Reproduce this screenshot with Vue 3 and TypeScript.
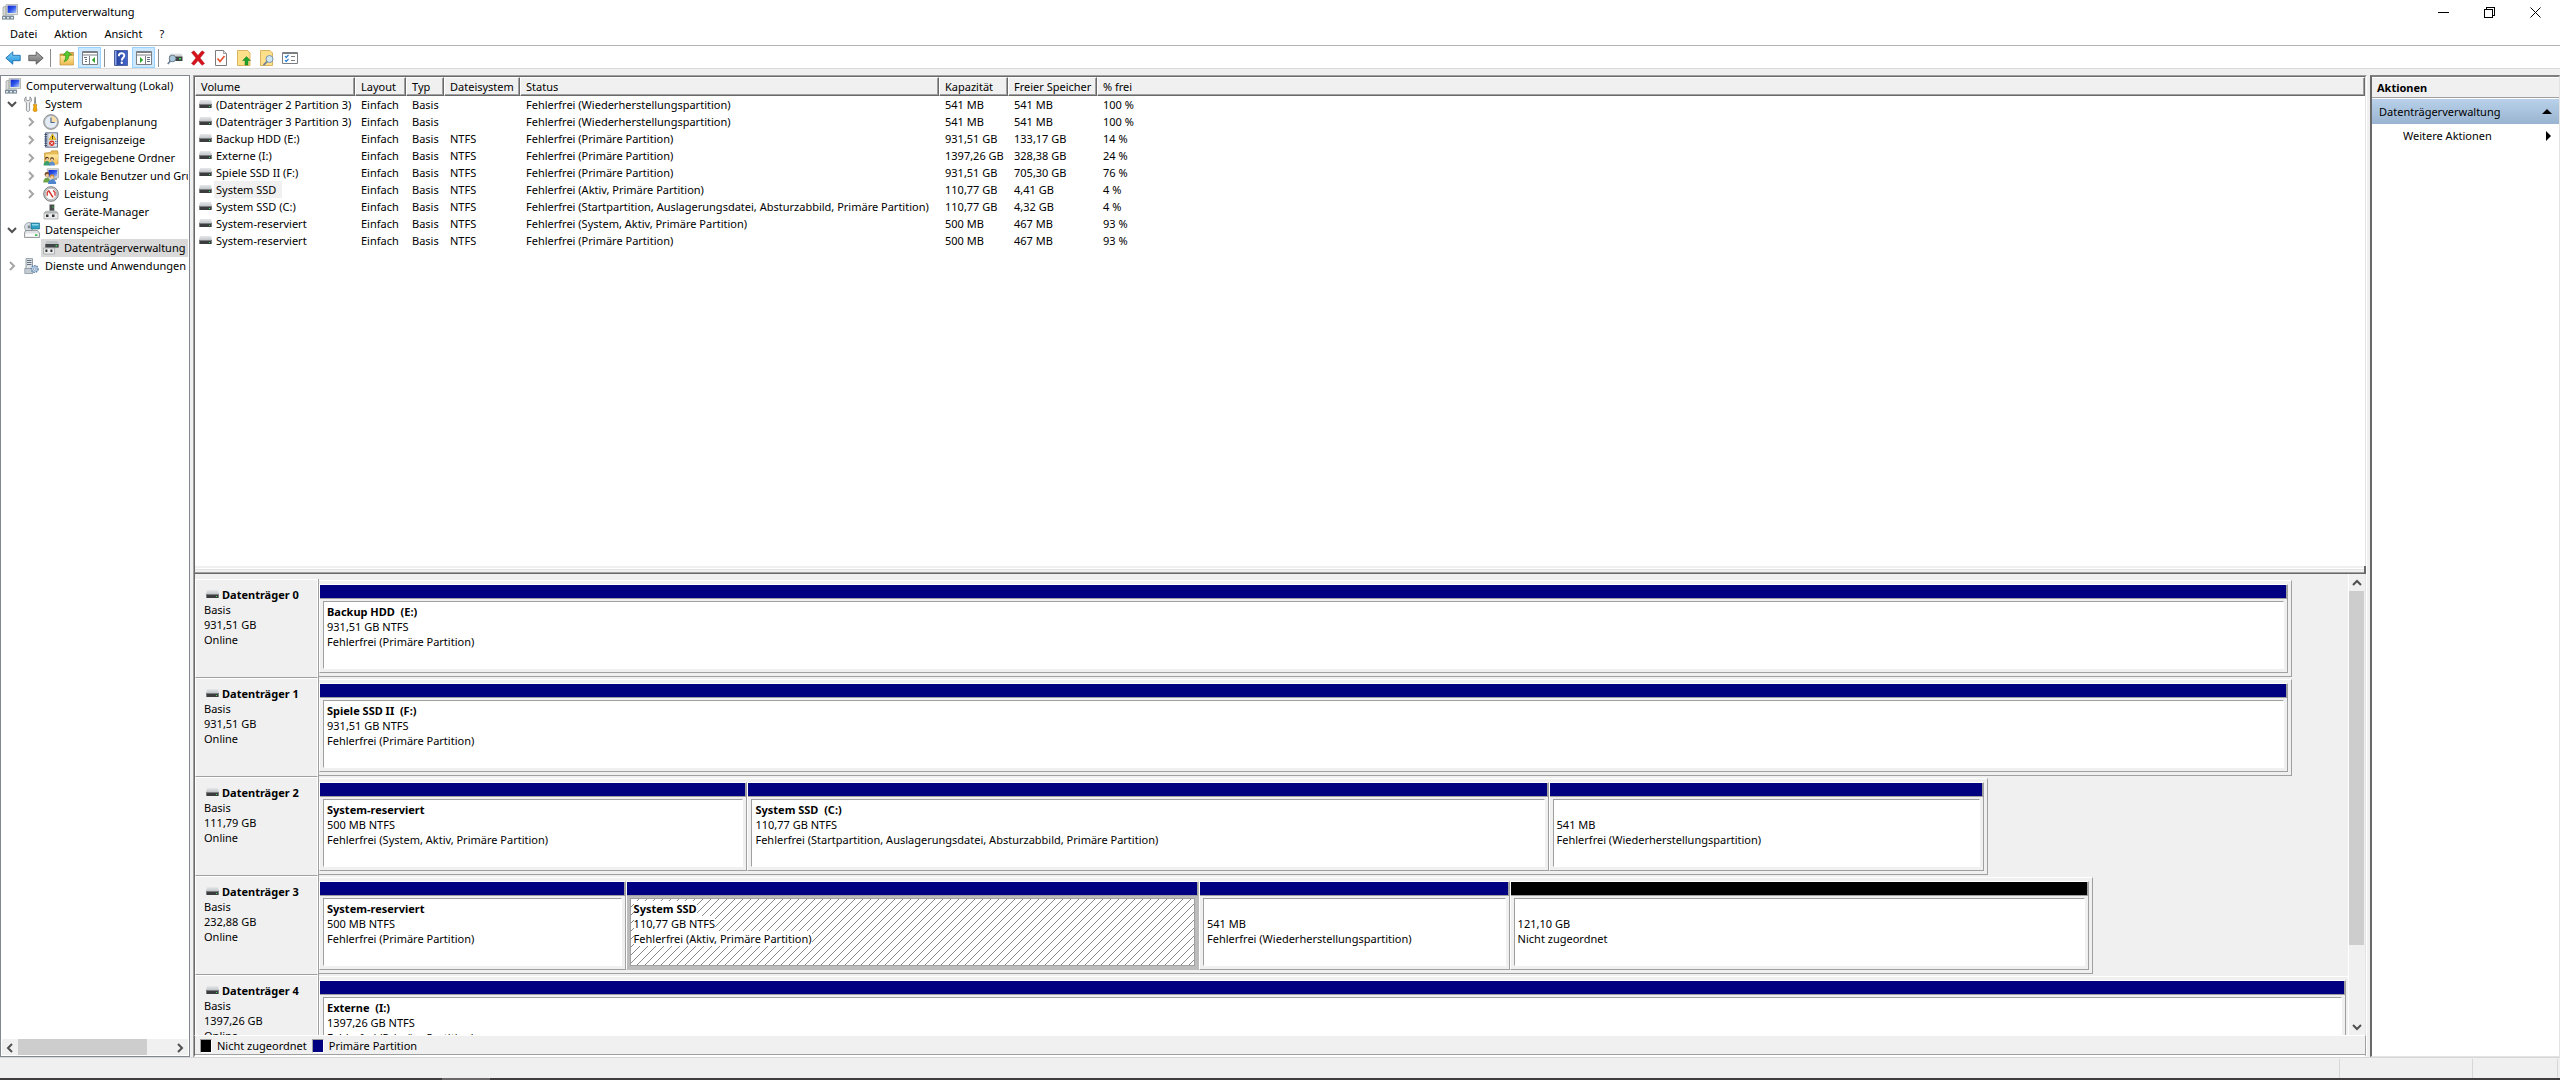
<script setup lang="ts">
interface TreeItem {
  label: string
  icon: string
  level: number
  state: 'open' | 'closed' | 'leaf'
  selected?: boolean
}

interface Volume {
  name: string
  fs: string
  status: string
  capacity: string
  free: string
  percent: string
  highlighted?: boolean
}

interface Partition {
  title: string
  size: string
  status: string
  weight: number
  unallocated?: boolean
  selected?: boolean
}

interface Disk {
  name: string
  size: string
  span: number
  partitions: Partition[]
}

interface Tool {
  icon: string
  label: string
  active?: boolean
  separator?: boolean
}

const menus: string[] = ['Datei', 'Aktion', 'Ansicht', '?']

const tools: Tool[] = [
  { icon: 'back', label: 'Zurück' },
  { icon: 'forward', label: 'Vorwärts', separator: true },
  { icon: 'folder-up', label: 'Übergeordnete Ebene' },
  { icon: 'tree-pane', label: 'Konsolenstruktur', active: true, separator: true },
  { icon: 'help', label: 'Hilfe' },
  { icon: 'action-pane', label: 'Aktionsbereich', active: true, separator: true },
  { icon: 'rescan', label: 'Datenträger neu einlesen' },
  { icon: 'delete', label: 'Löschen' },
  { icon: 'check-page', label: 'Eigenschaften' },
  { icon: 'page-up', label: 'Öffnen' },
  { icon: 'page-find', label: 'Durchsuchen' },
  { icon: 'options', label: 'Einstellungen' },
]

const tree: TreeItem[] = [
  { label: 'Computerverwaltung (Lokal)', icon: 'computer', level: 0, state: 'leaf' },
  { label: 'System', icon: 'system', level: 1, state: 'open' },
  { label: 'Aufgabenplanung', icon: 'clock', level: 2, state: 'closed' },
  { label: 'Ereignisanzeige', icon: 'events', level: 2, state: 'closed' },
  { label: 'Freigegebene Ordner', icon: 'shared', level: 2, state: 'closed' },
  { label: 'Lokale Benutzer und Gruppen', icon: 'users', level: 2, state: 'closed' },
  { label: 'Leistung', icon: 'gauge', level: 2, state: 'closed' },
  { label: 'Geräte-Manager', icon: 'devices', level: 2, state: 'leaf' },
  { label: 'Datenspeicher', icon: 'storage', level: 1, state: 'open' },
  { label: 'Datenträgerverwaltung', icon: 'diskmgmt', level: 2, state: 'leaf', selected: true },
  { label: 'Dienste und Anwendungen', icon: 'services', level: 1, state: 'closed' },
]

const columns: { label: string; cls: string }[] = [
  { label: 'Volume', cls: 'c-volume' },
  { label: 'Layout', cls: 'c-layout' },
  { label: 'Typ', cls: 'c-type' },
  { label: 'Dateisystem', cls: 'c-fs' },
  { label: 'Status', cls: 'c-status' },
  { label: 'Kapazität', cls: 'c-capacity' },
  { label: 'Freier Speicher', cls: 'c-free' },
  { label: '% frei', cls: 'c-percent' },
]

const recovery = 'Fehlerfrei (Wiederherstellungspartition)'
const primary = 'Fehlerfrei (Primäre Partition)'
const startup = 'Fehlerfrei (Startpartition, Auslagerungsdatei, Absturzabbild, Primäre Partition)'

const volumes: Volume[] = [
  { name: '(Datenträger 2 Partition 3)', fs: '', status: recovery, capacity: '541 MB', free: '541 MB', percent: '100 %' },
  { name: '(Datenträger 3 Partition 3)', fs: '', status: recovery, capacity: '541 MB', free: '541 MB', percent: '100 %' },
  { name: 'Backup HDD (E:)', fs: 'NTFS', status: primary, capacity: '931,51 GB', free: '133,17 GB', percent: '14 %' },
  { name: 'Externe (I:)', fs: 'NTFS', status: primary, capacity: '1397,26 GB', free: '328,38 GB', percent: '24 %' },
  { name: 'Spiele SSD II (F:)', fs: 'NTFS', status: primary, capacity: '931,51 GB', free: '705,30 GB', percent: '76 %' },
  { name: 'System SSD', fs: 'NTFS', status: 'Fehlerfrei (Aktiv, Primäre Partition)', capacity: '110,77 GB', free: '4,41 GB', percent: '4 %', highlighted: true },
  { name: 'System SSD (C:)', fs: 'NTFS', status: startup, capacity: '110,77 GB', free: '4,32 GB', percent: '4 %' },
  { name: 'System-reserviert', fs: 'NTFS', status: 'Fehlerfrei (System, Aktiv, Primäre Partition)', capacity: '500 MB', free: '467 MB', percent: '93 %' },
  { name: 'System-reserviert', fs: 'NTFS', status: primary, capacity: '500 MB', free: '467 MB', percent: '93 %' },
]

/* Disk spans are relative to the full width of the graph area. */
const fullSpan = 2029

const disks: Disk[] = [
  {
    name: 'Datenträger 0', size: '931,51 GB', span: 1973,
    partitions: [{ title: 'Backup HDD  (E:)', size: '931,51 GB NTFS', status: primary, weight: 1 }],
  },
  {
    name: 'Datenträger 1', size: '931,51 GB', span: 1973,
    partitions: [{ title: 'Spiele SSD II  (F:)', size: '931,51 GB NTFS', status: primary, weight: 1 }],
  },
  {
    name: 'Datenträger 2', size: '111,79 GB', span: 1669,
    partitions: [
      { title: 'System-reserviert', size: '500 MB NTFS', status: 'Fehlerfrei (System, Aktiv, Primäre Partition)', weight: 428 },
      { title: 'System SSD  (C:)', size: '110,77 GB NTFS', status: startup, weight: 802 },
      { title: '', size: '541 MB', status: recovery, weight: 435 },
    ],
  },
  {
    name: 'Datenträger 3', size: '232,88 GB', span: 1774,
    partitions: [
      { title: 'System-reserviert', size: '500 MB NTFS', status: primary, weight: 306 },
      { title: 'System SSD', size: '110,77 GB NTFS', status: 'Fehlerfrei (Aktiv, Primäre Partition)', weight: 574, selected: true },
      { title: '', size: '541 MB', status: recovery, weight: 310 },
      { title: '', size: '121,10 GB', status: 'Nicht zugeordnet', weight: 580, unallocated: true },
    ],
  },
  {
    name: 'Datenträger 4', size: '1397,26 GB', span: 2031,
    partitions: [{ title: 'Externe  (I:)', size: '1397,26 GB NTFS', status: primary, weight: 1 }],
  },
]

const diskWidth = (disk: Disk) => ({ width: `${(disk.span / fullSpan) * 100}%` })
</script>

<template>
  <svg class="sprite" aria-hidden="true">
    <defs>
      <linearGradient id="gScreen" x1="0" y1="0" x2="1" y2="1">
        <stop offset="0" stop-color="#1020c8" /><stop offset="0.5" stop-color="#2f57ea" /><stop offset="1" stop-color="#b9cdf8" />
      </linearGradient>
      <linearGradient id="gBlue" x1="0" y1="0" x2="0" y2="1">
        <stop offset="0" stop-color="#7fd0f7" /><stop offset="1" stop-color="#1f8fd8" />
      </linearGradient>
      <linearGradient id="gGray" x1="0" y1="0" x2="0" y2="1">
        <stop offset="0" stop-color="#b5b5b5" /><stop offset="1" stop-color="#6c6c6c" />
      </linearGradient>
      <linearGradient id="gFolder" x1="0" y1="0" x2="0" y2="1">
        <stop offset="0" stop-color="#ffe9a3" /><stop offset="1" stop-color="#eebb50" />
      </linearGradient>
      <linearGradient id="gHelp" x1="0" y1="0" x2="1" y2="0">
        <stop offset="0" stop-color="#1f3c96" /><stop offset="1" stop-color="#4668cf" />
      </linearGradient>
      <linearGradient id="gDrive" x1="0" y1="0" x2="0" y2="1">
        <stop offset="0" stop-color="#e6e8ea" /><stop offset="1" stop-color="#c3c7ca" />
      </linearGradient>
      <pattern id="hatch" width="8" height="8" patternUnits="userSpaceOnUse">
        <path
          fill="#8a8a8a" shape-rendering="crispEdges"
          d="M0 7h1v1H0zM1 6h1v1H1zM2 5h1v1H2zM3 4h1v1H3zM4 3h1v1H4zM5 2h1v1H5zM6 1h1v1H6zM7 0h1v1H7z"
        />
      </pattern>
    </defs>

    <symbol id="i-computer" viewBox="0 0 16 16">
      <path fill="#d8dad6" stroke="#8b9190" stroke-width="0.6" d="M1 3l3-1v9l-3 1z" />
      <path fill="#e4e6e0" stroke="#8f938c" stroke-width="0.6" d="M4.3.4h11.2v10.2H4.3z" />
      <path fill="url(#gScreen)" d="M5.6 1.6h8.8v7.4H5.6z" />
      <path fill="#9fb4c4" d="M3 11.2h8.5l1 2.2H3z" />
      <path fill="#7c8c98" d="M0 12h12v3.6H0z" />
      <path fill="#dfe8ee" d="M1 13h2v1.6H1zM5 13h2v1.6H5zM9 13h2v1.6H9z" />
    </symbol>

    <symbol id="i-system" viewBox="0 0 16 16">
      <path
        fill="#e9ebec" stroke="#7d8284" stroke-width="0.8"
        d="M2 .8L.8 2.4.6 5l1.8 1.8v7c0 2.2 3.2 2.2 3.2 0v-7L7.400 5l-.2-2.600L6 .8v3L4 4.800l-2-1z"
      />
      <path fill="#8b9092" d="M10.400.8h1.400l.4 7h-2.200z" />
      <path fill="#f5a800" stroke="#b87a08" stroke-width="0.6" d="M9.300 8.400h3.600l-.6 2 .8 3.800c0 1.800-4 1.800-4 0l.8-3.800z" />
    </symbol>

    <symbol id="i-clock" viewBox="0 0 16 16">
      <circle cx="8" cy="8" r="7.400" fill="#b4b6b9" stroke="#85888c" stroke-width="0.8" />
      <circle cx="8" cy="8" r="6" fill="#e3ebf5" />
      <path fill="#f7dca4" d="M8 8V2A6 6 0 0 1 14 8z" />
      <path fill="none" stroke="#4a6390" stroke-width="1.100" d="M8 3.400V8.500h3.600" />
    </symbol>

    <symbol id="i-events" viewBox="0 0 16 16">
      <path fill="#aeb7c6" stroke="#4d5c7b" stroke-width="0.8" d="M2.500.8h12v14.400h-12z" />
      <path fill="#e4e8ef" d="M5.500 1.500h8.300v13H5.500z" />
      <path fill="#31446b" d="M1.500 2h2.500v1H1.500zM1.500 4.200h2.500v1H1.500zM1.500 6.400h2.500v1H1.500zM1.500 8.600h2.500v1H1.500zM1.500 10.800h2.500v1H1.500zM1.500 13h2.500v1H1.500z" />
      <path fill="#ffcf26" stroke="#b58a00" stroke-width="0.5" d="M9.500 1.800l3.600 5.800H6z" />
      <path fill="#222" d="M9 3.800h1v2H9zM9 6.300h1v.8H9z" />
      <circle cx="8.800" cy="11.300" r="2.700" fill="#d7352b" />
      <path stroke="#fff" stroke-width="0.9" d="M7.700 10.200l2.200 2.200M9.900 10.200l-2.200 2.200" />
      <path fill="#5c7cb8" d="M12 9h1.500v1H12zM12 11h1.500v1H12z" />
    </symbol>

    <symbol id="i-shared" viewBox="0 0 16 16">
      <path fill="#e9bd57" stroke="#b98c2c" stroke-width="0.6" d="M1.500 3l6-.5 1-1.700h6l.5 1.700v11.500H1.500z" />
      <path fill="url(#gFolder)" d="M3 4.500h12.300l-1 10H2z" />
      <circle cx="4" cy="8.500" r="1.800" fill="#5a3b22" />
      <circle cx="4.300" cy="9.200" r="1.200" fill="#f0c9a0" />
      <path fill="#3a9d6c" d="M.5 15.500c0-6 7-6 7 0z" />
      <circle cx="9" cy="9" r="1.800" fill="#46301e" />
      <circle cx="9" cy="9.700" r="1.200" fill="#f0c9a0" />
      <path fill="#5b8fd0" d="M6 15.500c0-5.500 6-5.500 6 0z" />
    </symbol>

    <symbol id="i-users" viewBox="0 0 16 16">
      <path fill="#dfe1dc" stroke="#8f938c" stroke-width="0.6" d="M4.300.8h11.200v9H4.300z" />
      <path fill="url(#gScreen)" d="M5.500 2h8.800v6.700H5.500z" />
      <path fill="#9aa6ae" d="M9 10h5v2H9z" />
      <circle cx="4" cy="6.500" r="2.400" fill="#6e4723" />
      <circle cx="4.200" cy="7.500" r="1.700" fill="#eec398" />
      <path fill="#6fa34a" d="M.2 14.500c0-6.500 7.500-6.500 7.500 0z" />
      <circle cx="9" cy="8.500" r="2.300" fill="#c78f3d" />
      <circle cx="9" cy="9.500" r="1.600" fill="#f2cda4" />
      <path fill="#4f86cd" d="M5 16c0-6.500 8.200-6.500 8.200 0z" />
    </symbol>

    <symbol id="i-gauge" viewBox="0 0 16 16">
      <circle cx="8" cy="8" r="7.300" fill="#d4d6d8" stroke="#66696d" stroke-width="0.9" />
      <circle cx="8" cy="8" r="5.700" fill="#fff" stroke="#85898d" stroke-width="0.5" />
      <path fill="none" stroke="#d3322b" stroke-width="1.300" d="M4.200 9.800V6.500l1.300-1.700M10.200 4.500l1.800 2v3.300" />
      <path stroke="#d3322b" stroke-width="1.500" d="M5.500 4.300l4.500 7" />
    </symbol>

    <symbol id="i-devices" viewBox="0 0 16 16">
      <path fill="#4c4c4c" d="M6.500.5h4.800v6.300H6.500z" />
      <path fill="#2dc84a" d="M9.300 2.500h1.200v1.200H9.300z" />
      <path fill="#c9cbcd" stroke="#999c9e" stroke-width="0.5" d="M3 7h10l2 2H1z" />
      <path fill="#e9eaeb" stroke="#8d9092" stroke-width="0.6" d="M1 9h14v6H1z" />
      <path fill="#333" d="M3 10.500h2.500V13H3zM9 10.500h2.500V13H9z" />
    </symbol>

    <symbol id="i-storage" viewBox="0 0 16 16">
      <circle cx="5" cy="5" r="4.500" fill="#d5dbe0" stroke="#8b9399" stroke-width="0.7" />
      <circle cx="5" cy="5" r="1.400" fill="#7d878e" />
      <path fill="#2d9fc0" stroke="#17677f" stroke-width="0.6" d="M7 1h8.500v6H7z" />
      <path fill="#8ed8ec" d="M8 2h6.500v1.500H8z" />
      <path fill="#dfe2e4" stroke="#74797d" stroke-width="0.7" d="M1.500 8.500h12l2 2.500v4.500H.5V11z" />
      <path fill="#fafafa" d="M1.500 11.500h13v3h-13z" />
      <path fill="#37b24a" d="M11 12.300h2.500v1.600H11z" />
    </symbol>

    <symbol id="i-diskmgmt" viewBox="0 0 16 16">
      <path fill="#bfc3c6" d="M3.500 1h11l1.200 3H2.300z" />
      <path fill="#424548" d="M2.300 4h13.400v3.600H2.300z" />
      <path fill="#3fe05a" d="M12.600 5.100h1.600v1.300h-1.600z" />
      <path fill="#eceded" stroke="#8e9193" stroke-width="0.6" d="M.6 8h11v6H.6z" />
      <path fill="#333" d="M2.400 9.500h2V12h-2zM7.400 9.500h2V12h-2z" />
    </symbol>

    <symbol id="i-services" viewBox="0 0 16 16">
      <path fill="#dde3e8" stroke="#7f8b95" stroke-width="0.8" d="M2 .6h6.500v11H2z" />
      <path fill="#66727d" d="M3 2h4.500v.9H3zM3 4h4.500v.9H3zM3 6h4.500v.9H3z" />
      <path fill="#c5cdd4" stroke="#7f8b95" stroke-width="0.7" d="M.8 10.500h8v5h-8z" />
      <circle cx="10.700" cy="11" r="3.400" fill="#b8cde2" stroke="#5e82a8" stroke-width="1.400" stroke-dasharray="1.500 1" />
      <circle cx="10.700" cy="11" r="1.200" fill="#fff" stroke="#5e82a8" stroke-width="0.6" />
    </symbol>

    <symbol id="i-drive" viewBox="0 0 13 9">
      <path fill="url(#gDrive)" d="M1 0h11l1 4H0z" />
      <path fill="#7b7e80" d="M0 4h13v4H0z" />
      <path fill="#3a3c3e" d="M1 5h11v3H1z" />
      <path fill="#3ee35c" d="M10 6h1v1h-1z" />
    </symbol>

    <symbol id="i-back" viewBox="0 0 16 16">
      <path fill="url(#gBlue)" stroke="#1d71b4" stroke-width="0.9" d="M.8 8l7-6.200v3.500h7.400v5.400H7.800v3.500z" />
    </symbol>
    <symbol id="i-forward" viewBox="0 0 16 16">
      <path fill="url(#gGray)" stroke="#5a5a5a" stroke-width="0.9" d="M15.200 8l-7-6.200v3.500H.8v5.400h7.400v3.500z" />
    </symbol>
    <symbol id="i-folder-up" viewBox="0 0 16 16">
      <path fill="#dca94a" stroke="#a97d2c" stroke-width="0.6" d="M1 4h7l1-1.500h5.500V15H1z" />
      <path fill="url(#gFolder)" d="M1.500 6h13v8.600h-13z" />
      <path fill="#58c832" stroke="#2b8a14" stroke-width="0.6" d="M8 .8l4.500 4-2.400.2c-.2 4-2 6-5.100 6.600 1.500-2 1.700-4 1.500-6.400l-2.300-.2z" />
    </symbol>
    <symbol id="i-tree-pane" viewBox="0 0 16 16">
      <path fill="#fff" stroke="#7b7f84" d="M.5 1.500h15v13H.5z" />
      <path fill="#7b7f84" d="M1 2h14v1H1zM1 4.500h14v1H1zM7 6h1v8H7z" />
      <path fill="#5c6b80" d="M2 7h3v1H2zM3 9h2v1H3zM3 11h2v1H3z" />
      <path fill="#2fa52c" d="M13 7v6L9.800 10z" />
    </symbol>
    <symbol id="i-action-pane" viewBox="0 0 16 16">
      <path fill="#fff" stroke="#7b7f84" d="M.5 1.500h15v13H.5z" />
      <path fill="#7b7f84" d="M1 2h14v1H1zM1 4.500h14v1H1zM9 6h1v8H9z" />
      <path fill="#5c6b80" d="M11 7h3v1h-3zM11 9h3v1h-3zM11 11h3v1h-3z" />
      <path fill="#2fa52c" d="M4 7v6l3.200-3z" />
    </symbol>
    <symbol id="i-help" viewBox="0 0 16 16">
      <path fill="url(#gHelp)" stroke="#1b3279" stroke-width="0.6" d="M1.500.5h13v15h-13z" />
      <path fill="#8fa5ea" d="M2 1h1.500v14H2z" />
      <path fill="none" stroke="#fff" stroke-width="1.900" d="M5.800 6.200c0-3.900 5.500-3.700 5.500-.6 0 2.200-2.500 2.100-2.500 4.800" />
      <circle cx="8.800" cy="12.800" r="1.200" fill="#fff" />
    </symbol>
    <symbol id="i-rescan" viewBox="0 0 16 16">
      <path fill="url(#gDrive)" d="M3 3.500h11.500l1 3H2z" />
      <path fill="#3e4144" d="M2 6.500h13.500V11H2z" />
      <path fill="#35e055" d="M12 8h2v1.600h-2z" />
      <circle cx="5.500" cy="8.500" r="3.300" fill="#a9c6da" stroke="#6f7f8b" />
      <path stroke="#697e98" stroke-width="1.800" d="M3.400 11L.8 14" />
    </symbol>
    <symbol id="i-delete" viewBox="0 0 16 16">
      <path fill="#d8121b" stroke="#a50a10" stroke-width="0.5" d="M1.500 2.500L4 .8l4 4.600 4-4.600 2.500 1.700L10 8l4.500 5.500-2.500 1.700-4-4.600-4 4.600-2.500-1.700L6 8z" />
    </symbol>
    <symbol id="i-check-page" viewBox="0 0 16 16">
      <path fill="#fff" stroke="#7b7b7b" d="M2.500.5h8l3 3v12h-11z" />
      <path fill="#ddd" stroke="#7b7b7b" stroke-width="0.7" d="M10.500.5v3h3" />
      <path fill="none" stroke="#e5532d" stroke-width="1.700" d="M4.500 8.500l2.500 3 4.500-5.500" />
    </symbol>
    <symbol id="i-page-up" viewBox="0 0 16 16">
      <path fill="#ffe08a" stroke="#d0a648" stroke-width="0.8" d="M1.500.5h10l2.500 2.500v12.500H1.500z" />
      <path fill="#1fa32a" stroke="#13791c" stroke-width="0.5" d="M10.500 6.500l3.800 4h-2.300V15H9v-4.500H6.700z" />
    </symbol>
    <symbol id="i-page-find" viewBox="0 0 16 16">
      <path fill="#ffe08a" stroke="#d0a648" stroke-width="0.8" d="M1.500.5h9.500l2.500 2.500v12.500h-12z" />
      <circle cx="10.500" cy="9" r="3.500" fill="#cfe6f4" stroke="#7b93a6" />
      <path stroke="#6c8399" stroke-width="1.700" d="M8 11.700l-3.500 3.500" />
    </symbol>
    <symbol id="i-options" viewBox="0 0 16 16">
      <path fill="#fff" stroke="#7b7f84" d="M.5 2.500h15v11H.5z" />
      <path fill="#7b7f84" d="M1 3h14v1H1zM9 6h4v1H9zM9 10h4v1H9z" />
      <path fill="none" stroke="#2b7fd0" stroke-width="1.200" d="M3 6l1.200 1.500L6.500 5M3 10l1.200 1.500L6.500 9" />
    </symbol>
  </svg>

  <div class="window">
    <header class="titlebar">
      <svg class="icon16"><use href="#i-computer" /></svg>
      <h1>Computerverwaltung</h1>
      <div class="caption-buttons">
        <button type="button" aria-label="Minimieren">
          <svg viewBox="0 0 11 11"><path d="M0 5.500h11" /></svg>
        </button>
        <button type="button" aria-label="Verkleinern">
          <svg viewBox="0 0 11 11"><path d="M.5 2.500h8v8h-8zM2.500 2V.5h8v8H9" /></svg>
        </button>
        <button type="button" aria-label="Schließen">
          <svg class="smooth" viewBox="0 0 11 11"><path d="M.5.5l10 10M10.500.5l-10 10" /></svg>
        </button>
      </div>
    </header>

    <nav class="menubar">
      <button v-for="menu in menus" :key="menu" type="button">{{ menu }}</button>
    </nav>

    <div class="toolbar" role="toolbar">
      <template v-for="tool in tools" :key="tool.icon">
        <button type="button" :class="{ active: tool.active }" :aria-label="tool.label">
          <svg class="icon16"><use :href="`#i-${tool.icon}`" /></svg>
        </button>
        <span v-if="tool.separator" class="separator"></span>
      </template>
    </div>

    <main class="workspace">
      <aside class="tree-pane">
        <ul>
          <li v-for="item in tree" :key="item.label" :class="[`level-${item.level}`, { selected: item.selected }]">
            <button
              v-if="item.state !== 'leaf'" type="button" class="twisty"
              :class="item.state" :aria-label="item.label"
            >
              <svg viewBox="0 0 10 10">
                <path v-if="item.state === 'open'" d="M1 3l4 4 4-4" />
                <path v-else d="M3 1l4 4-4 4" />
              </svg>
            </button>
            <span class="node">
              <svg class="icon16"><use :href="`#i-${item.icon}`" /></svg>
              <span>{{ item.label }}</span>
            </span>
          </li>
        </ul>
        <div class="hscroll">
          <button type="button" aria-label="Nach links"><svg viewBox="0 0 10 10"><path d="M7 1L3 5l4 4" /></svg></button>
          <div class="track"><div class="thumb"></div></div>
          <button type="button" aria-label="Nach rechts"><svg viewBox="0 0 10 10"><path d="M3 1l4 4-4 4" /></svg></button>
        </div>
      </aside>

      <section class="content">
        <div class="volumes">
          <table>
            <colgroup>
              <col v-for="column in columns" :key="column.cls" :class="column.cls" />
            </colgroup>
            <thead>
              <tr>
                <th v-for="column in columns" :key="column.cls" scope="col"><div>{{ column.label }}</div></th>
              </tr>
            </thead>
            <tbody>
              <tr v-for="(volume, index) in volumes" :key="index">
                <td class="name">
                  <div>
                    <svg class="drive"><use href="#i-drive" /></svg>
                    <span :class="{ highlighted: volume.highlighted }">{{ volume.name }}</span>
                  </div>
                </td>
                <td>Einfach</td>
                <td>Basis</td>
                <td>{{ volume.fs }}</td>
                <td>{{ volume.status }}</td>
                <td>{{ volume.capacity }}</td>
                <td>{{ volume.free }}</td>
                <td>{{ volume.percent }}</td>
              </tr>
            </tbody>
          </table>
        </div>
        <div class="splitter"></div>

        <div class="graph">
          <div class="disks">
            <article v-for="disk in disks" :key="disk.name" class="disk">
              <div class="disk-info">
                <h2><svg class="drive"><use href="#i-drive" /></svg>{{ disk.name }}</h2>
                <p>Basis</p>
                <p>{{ disk.size }}</p>
                <p>Online</p>
              </div>
              <div class="disk-area">
                <div class="disk-box" :style="diskWidth(disk)">
                  <div
                    v-for="(part, index) in disk.partitions" :key="index" class="partition"
                    :class="{ unallocated: part.unallocated, selected: part.selected }"
                    :style="{ flexGrow: part.weight }"
                  >
                    <div class="bar"></div>
                    <div class="body">
                      <svg v-if="part.selected" class="hatching"><rect width="100%" height="100%" fill="url(#hatch)" /></svg>
                      <p><strong>{{ part.title }}</strong></p>
                      <p><span>{{ part.size }}</span></p>
                      <p><span>{{ part.status }}</span></p>
                    </div>
                  </div>
                </div>
              </div>
            </article>
          </div>
          <div class="vscroll">
            <button type="button" aria-label="Nach oben"><svg viewBox="0 0 10 10"><path d="M1 7l4-4 4 4" /></svg></button>
            <div class="track"><div class="thumb"></div></div>
            <button type="button" aria-label="Nach unten"><svg viewBox="0 0 10 10"><path d="M1 3l4 4 4-4" /></svg></button>
          </div>
        </div>
        <div class="legend">
          <span><i class="swatch black"></i>Nicht zugeordnet</span>
          <span><i class="swatch navy"></i>Primäre Partition</span>
        </div>
      </section>

      <aside class="actions">
        <h2>Aktionen</h2>
        <button type="button" class="group">
          <span>Datenträgerverwaltung</span>
          <svg class="up" viewBox="0 0 10 5"><path d="M5 0l5 5H0z" /></svg>
        </button>
        <button type="button" class="more">
          <span>Weitere Aktionen</span>
          <svg class="right" viewBox="0 0 5 10"><path d="M0 0l5 5-5 5z" /></svg>
        </button>
      </aside>
    </main>

    <footer class="statusbar"><span></span><span></span><span></span></footer>
    <div class="taskbar"><span></span></div>
  </div>
</template>

<style>
body {
  margin: 0;
  overflow: hidden;
}
</style>

<style scoped>
* {
  box-sizing: border-box;
}

.sprite {
  position: absolute;
  width: 0;
  height: 0;
}

.window {
  display: flex;
  flex-direction: column;
  height: 100vh;
  background: #f0f0f0;
  color: #000;
  font-family: "Noto Sans", "Open Sans", sans-serif;
  font-size: 11px;
  line-height: 18px;
}

h1,
h2,
p,
ul {
  margin: 0;
  padding: 0;
  font-size: inherit;
  font-weight: 400;
  list-style: none;
}

button {
  padding: 0;
  border: 0;
  background: none;
  color: inherit;
  font: inherit;
}

.icon16 {
  flex: none;
  width: 16px;
  height: 16px;
}

.drive {
  flex: none;
  width: 13px;
  height: 9px;
}

/* Title bar, menu and toolbar */
.titlebar {
  display: flex;
  flex: none;
  align-items: center;
  gap: 6px;
  height: 24px;
  padding: 0 2px;
  background: #fff;
}

.titlebar h1 {
  flex: 1;
}

.caption-buttons {
  display: flex;
  height: 20px;
}

.caption-buttons button {
  display: grid;
  place-items: center;
  width: 46px;
}

.caption-buttons svg {
  width: 11px;
  height: 11px;
  fill: none;
  stroke: #000;
  shape-rendering: crispEdges;
}

.caption-buttons .smooth {
  shape-rendering: auto;
}

.menubar {
  display: flex;
  flex: none;
  gap: 17px;
  height: 22px;
  padding: 0 10px 2px;
  border-bottom: 1px solid #b4b4b4;
  background: #fff;
}

.toolbar {
  display: flex;
  flex: none;
  align-items: center;
  height: 23px;
  padding: 1px 0 0 1px;
  border-bottom: 1px solid #dadada;
  background: #fff;
}

.toolbar button {
  display: grid;
  place-items: center;
  width: 23px;
  height: 21px;
}

.toolbar .active {
  border: 1px solid #99d1ff;
  background: #cce8ff;
}

.separator {
  width: 1px;
  height: 18px;
  margin: 0 4px 0 3px;
  background: #8d8d8d;
}

/* Three-pane workspace */
.workspace {
  display: grid;
  flex: 1;
  grid-template-columns: 190px minmax(0, 1fr) 190px;
  gap: 3px;
  min-height: 0;
  padding-top: 6px;
}

.tree-pane {
  display: flex;
  flex-direction: column;
  min-height: 0;
  padding: 1px;
  border: 1px solid #828790;
  background: #fff;
}

.tree-pane ul {
  flex: 1;
  overflow: hidden;
}

.tree-pane li {
  display: flex;
  align-items: center;
  height: 18px;
  white-space: nowrap;
}

.level-0 {
  padding-left: 1px;
}

.level-1 {
  padding-left: 5px;
}

.level-2 {
  padding-left: 24px;
}

.twisty {
  width: 10px;
  height: 10px;
  margin-right: 5px;
}

.twisty svg,
.hscroll svg,
.vscroll svg {
  display: block;
  width: 10px;
  height: 10px;
  fill: none;
  stroke: #505050;
  stroke-width: 2;
}

.twisty.closed svg {
  stroke: #a6a6a6;
}

.node {
  display: flex;
  flex: 1;
  align-items: center;
  gap: 5px;
  height: 18px;
  padding-left: 2px;
}

.level-2 > .node:first-child {
  margin-left: 15px;
}

.selected > .node {
  background: #d9d9d9;
}

.hscroll {
  display: flex;
  height: 16px;
  background: #f0f0f0;
}

.hscroll button,
.vscroll button {
  display: grid;
  place-items: center;
  width: 16px;
  height: 17px;
}

.track {
  flex: 1;
}

.thumb {
  background: #cdcdcd;
}

.hscroll .thumb {
  width: 84%;
  height: 16px;
}

/* Volume list */
.content {
  display: flex;
  flex-direction: column;
  min-height: 0;
  border-top: 1px solid #a0a0a0;
  border-right: 1px solid #fff;
  border-left: 1px solid #a0a0a0;
}

.volumes {
  flex: 490 0 0;
  min-height: 0;
  overflow: hidden;
  border-top: 1px solid #696969;
  border-right: 1px solid #e3e3e3;
  border-left: 1px solid #696969;
  background: #fff;
}

table {
  width: 100%;
  border-spacing: 0;
  table-layout: fixed;
}

.c-volume {
  width: 160px;
}

.c-layout {
  width: 51px;
}

.c-type {
  width: 38px;
}

.c-fs {
  width: 76px;
}

.c-status {
  width: 419px;
}

.c-capacity {
  width: 69px;
}

.c-free {
  width: 89px;
}

th {
  padding: 0;
  font-weight: 400;
  text-align: left;
  white-space: nowrap;
}

th div {
  height: 19px;
  padding-left: 5px;
  border: 1px solid #fff;
  border-right-color: #696969;
  border-bottom-color: #696969;
  background: #f0f0f0;
  box-shadow: inset -1px -1px #a0a0a0;
}

td {
  height: 17px;
  padding: 0 0 0 6px;
  line-height: 17px;
  white-space: nowrap;
}

td.name {
  padding-left: 4px;
}

td.name div {
  display: flex;
  align-items: center;
  gap: 2px;
}

td.name span {
  padding: 0 6px 0 2px;
}

.highlighted {
  background: #f0f0f0;
}

.splitter {
  flex: none;
  height: 8px;
  border-right: 2px solid #696969;
  border-bottom: 1px solid #696969;
  border-left: 1px solid #696969;
  background: linear-gradient(#f0f0f0 0 2px, #fff 2px 3px, #e3e3e3 3px 4px, #f0f0f0 4px 6px, #a0a0a0 6px);
}

/* Disk graph */
.graph {
  display: flex;
  flex: 461 0 0;
  min-height: 0;
  overflow: hidden;
  border-right: 1px solid #e3e3e3;
  border-left: 1px solid #696969;
}

.disks {
  flex: 1;
  min-width: 0;
  padding-top: 5px;
}

.disk {
  display: flex;
  height: 99px;
}

.disk-info {
  flex: none;
  width: 123px;
  padding: 7px 0 0 8px;
  border: 1px solid #fff;
  border-bottom-color: #a0a0a0;
  line-height: 15px;
}

.disk-info h2 {
  display: flex;
  align-items: center;
  gap: 3px;
  padding-left: 2px;
  font-weight: 700;
}

.disk-area {
  flex: 1;
  min-width: 0;
  overflow: hidden;
  padding: 1px 0;
  border-left: 1px solid #a0a0a0;
}

.disk-box {
  display: flex;
  height: 97px;
  padding: 3px 3px 3px 0;
  border: solid #a0a0a0;
  border-width: 1px 1px 1px 0;
  border-top-color: #fff;
}

.partition {
  display: flex;
  flex: 1 0 0;
  flex-direction: column;
  min-width: 0;
  border: 1px solid #a0a0a0;
  border-top-color: #fff;
  border-left-color: #fff;
}

.bar {
  height: 14px;
  border-right: 1px solid #a0a0a0;
  border-bottom: 1px solid #a0a0a0;
  background: #000080;
}

.unallocated .bar {
  background: #000;
}

.body {
  position: relative;
  flex: 1;
  margin: 2px 3px 3px;
  padding: 2px 0 0 3px;
  overflow: hidden;
  border: 1px solid #fff;
  border-top-color: #a0a0a0;
  border-left-color: #a0a0a0;
  background: #fff;
  line-height: 15px;
  white-space: pre;
}

.body p {
  position: relative;
  height: 15px;
}

.body strong {
  font-weight: 700;
}

.body strong,
.body span {
  display: inline-block;
  background: #fff;
}

.partition.selected {
  background: #bcbcbc;
  border-right-color: #bcbcbc;
  border-bottom-color: #bcbcbc;
}

.partition.selected .body {
  border-color: #a0a0a0;
}

.hatching {
  position: absolute;
  inset: 0;
  width: 100%;
  height: 100%;
}

.vscroll {
  display: flex;
  flex: none;
  flex-direction: column;
  width: 17px;
  border-right: 1px solid #f0f0f0;
  border-left: 1px solid #fff;
}

.vscroll .thumb {
  height: 83%;
}

.legend {
  display: flex;
  flex: none;
  gap: 5px;
  height: 22px;
  padding-left: 5px;
  border-top: 1px solid #fff;
  border-right: 1px solid #a0a0a0;
  border-bottom: 2px solid #fff;
  border-left: 1px solid #696969;
  box-shadow: inset 0 -1px #a0a0a0;
}

.legend span {
  display: flex;
  align-items: center;
  gap: 5px;
}

.swatch {
  width: 12px;
  height: 14px;
  border: 1px solid #fff;
  border-top-color: #a0a0a0;
  border-left-color: #a0a0a0;
}

.black {
  background: #000;
}

.navy {
  background: #000080;
}

/* Actions */
.actions {
  display: flex;
  flex-direction: column;
  padding: 1px 0 0;
  border: 1px solid #e3e3e3;
  border-top: 2px solid #808080;
  border-left: 2px solid #696969;
  background: #fff;
}

.actions h2 {
  height: 20px;
  padding-left: 5px;
  border-bottom: 1px solid #a0a0a0;
  background: #f0f0f0;
  font-weight: 700;
  line-height: 20px;
}

.actions button {
  display: flex;
  align-items: center;
  justify-content: space-between;
  height: 25px;
  padding: 0 7px;
  text-align: left;
}

.actions .group {
  margin-top: 1px;
  background: linear-gradient(#b9d1ea, #99b4d1);
}

.actions .more {
  height: 24px;
  padding: 0 8px 0 31px;
}

.up {
  width: 10px;
  height: 5px;
}

.right {
  width: 5px;
  height: 10px;
}

/* Status bar */
.statusbar {
  display: flex;
  flex: none;
  height: 21px;
  padding: 1px 2px 0 0;
  border-top: 1px solid #d7d7d7;
}

.statusbar span {
  width: 85px;
  border-right: 1px solid #d7d7d7;
}

.statusbar span:first-child {
  flex: 1;
}

.statusbar span:nth-child(2) {
  width: 133px;
}

.taskbar {
  flex: none;
  height: 2px;
  padding-left: 442px;
  background: #3f3d3d;
}

.taskbar span {
  display: block;
  width: 48px;
  height: 2px;
  background: #6a6868;
}
</style>
